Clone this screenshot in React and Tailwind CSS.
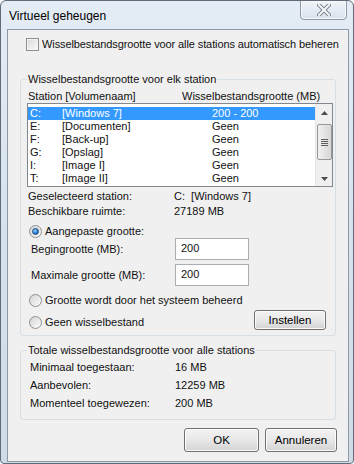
import React from 'react';

const drives = [
  { letter: 'C:', name: '[Windows 7]', size: '200 - 200', selected: true },
  { letter: 'E:', name: '[Documenten]', size: 'Geen' },
  { letter: 'F:', name: '[Back-up]', size: 'Geen' },
  { letter: 'G:', name: '[Opslag]', size: 'Geen' },
  { letter: 'I:', name: '[Image I]', size: 'Geen' },
  { letter: 'T:', name: '[Image II]', size: 'Geen' },
];

const Radio = ({ checked }) => (
  <span className="w-[13px] h-[13px] rounded-full border border-[#8e8f8f] bg-gradient-to-br from-[#d4d4d4] to-[#fcfcfc] flex items-center justify-center shrink-0">
    {checked && (
      <span className="w-[7px] h-[7px] rounded-full bg-[radial-gradient(circle_at_40%_35%,#9fd8fb,#2a7dd0_55%,#0d4a8c)] border border-[#1b4f85]" />
    )}
  </span>
);

const Button = ({ children, className = '' }) => (
  <button className={`rounded-[3px] border border-[#707070] bg-gradient-to-b from-[#f3f3f3] via-[#e8e8e8] to-[#d3d3d3] shadow-[inset_0_0_0_1px_#fbfbfb] text-[11.5px] text-black ${className}`}>
    {children}
  </button>
);

const Arrow = ({ up }) => (
  <svg width="7" height="4" viewBox="0 0 7 4">
    <path d={up ? 'M0 4 L3.5 0 L7 4 Z' : 'M0 0 L7 0 L3.5 4 Z'} fill="#4d4d4d" />
  </svg>
);

export default function App() {
  return (
    <div className="w-[354px] h-[464px] overflow-hidden relative rounded-t-[6px] rounded-b-[4px] border border-[#5f6b78] bg-gradient-to-b from-[#e4ecf5] via-[#d7e2ee] to-[#cfdbe7] font-['Liberation_Sans',sans-serif] text-[11px] text-[#111] leading-[15px]">
      {/* title bar */}
      <div className="h-[28px] pl-[8px] pt-[8px] text-[12px] text-black">Virtueel geheugen</div>
      <div className="absolute top-[-1px] right-[6px] w-[47px] h-[20px] rounded-b-[4px] border border-[#8c98a6] bg-gradient-to-b from-[#f0f4f8] to-[#d9e2ec] shadow-[inset_0_0_0_1px_#f7f9fb] flex items-center justify-center">
        <svg width="14" height="12" viewBox="0 0 14 12">
          <path d="M2 1 L12 11 M12 1 L2 11" stroke="#7d8590" strokeWidth="4" strokeLinecap="square" />
          <path d="M2 1 L12 11 M12 1 L2 11" stroke="#f4f6f8" strokeWidth="2" strokeLinecap="square" />
        </svg>
      </div>

      {/* client area */}
      <div className="ml-[6px] w-[342px] h-[433px] border border-[#8d99a7] bg-[#f0f0f0]">
        <div className="flex items-center h-[13px] mt-[8px] ml-[18px] gap-[3px] whitespace-nowrap">
          <span className="w-[13px] h-[13px] shrink-0 border border-[#8e8f8f] bg-gradient-to-br from-[#dadada] to-[#fbfbfb] shadow-[inset_0_0_0_1px_#f4f4f4]" />
          <span className="tracking-[-0.1px]">Wisselbestandsgrootte voor alle stations automatisch beheren</span>
        </div>

        <fieldset className="mt-[21px] ml-[12px] w-[316px] h-[264px] border border-[#d5dfe5] rounded-[3px] pl-[6px]">
          <legend className="px-[1px] leading-[15px]">Wisselbestandsgrootte voor elk station</legend>
          <div className="flex h-[14px] mt-[2px] leading-[14px]">
            <span className="w-[155px] pl-[1px]">Station [Volumenaam]</span>
            <span>Wisselbestandsgrootte (MB)</span>
          </div>

          <div className="w-[306px] h-[84px] border border-[#828790] bg-white flex">
            <div className="flex-1 pt-[3px]">
              {drives.map((d) => (
                <div
                  key={d.letter}
                  className={`flex h-[13px] leading-[13px] ${d.selected ? 'bg-[#3399ff] text-white' : ''}`}
                >
                  <span className="w-[34px] pl-[2px]">{d.letter}</span>
                  <span className="w-[150px]">{d.name}</span>
                  <span>{d.size}</span>
                </div>
              ))}
            </div>
            <div className="w-[17px] bg-[#f0f0f0] border-l border-[#e5e5e5] flex flex-col items-center">
              <div className="h-[17px] flex items-center justify-center"><Arrow up /></div>
              <div className="w-[15px] h-[36px] mt-[3px] rounded-[2px] border border-[#979797] bg-gradient-to-r from-[#f1f1f1] to-[#d7d7d7] flex flex-col items-center justify-center gap-[1px]">
                <span className="w-[7px] h-px bg-[#5f5f5f]" />
                <span className="w-[7px] h-px bg-[#5f5f5f]" />
                <span className="w-[7px] h-px bg-[#5f5f5f]" />
                <span className="w-[7px] h-px bg-[#5f5f5f]" />
              </div>
              <div className="flex-1" />
              <div className="h-[15px] flex items-center justify-center"><Arrow /></div>
            </div>
          </div>

          <div className="flex mt-[2px] pl-[1px]">
            <span className="w-[146px]">Geselecteerd station:</span>
            <span>C:&nbsp;&nbsp;[Windows 7]</span>
          </div>
          <div className="flex pl-[1px]">
            <span className="w-[146px]">Beschikbare ruimte:</span>
            <span>27189 MB</span>
          </div>

          <div className="flex items-center h-[13px] mt-[6px] ml-[2px] gap-[3px]">
            <Radio checked />
            <span>Aangepaste grootte:</span>
          </div>
          <div className="flex items-center h-[22px]">
            <span className="w-[148px] pl-[4px]">Begingrootte (MB):</span>
            <div className="w-[74px] h-[22px] border border-[#abadb3] bg-white pl-[5px] pt-[2px]">200</div>
          </div>
          <div className="flex items-center h-[22px] mt-[4px]">
            <span className="w-[148px] pl-[4px]">Maximale grootte (MB):</span>
            <div className="w-[74px] h-[22px] border border-[#abadb3] bg-white pl-[5px] pt-[2px]">200</div>
          </div>

          <div className="flex items-center h-[13px] mt-[8px] ml-[2px] gap-[3px]">
            <Radio />
            <span>Grootte wordt door het systeem beheerd</span>
          </div>
          <div className="flex mt-[3px]">
            <div className="flex items-center h-[13px] mt-[6px] ml-[2px] gap-[3px]">
              <Radio />
              <span>Geen wisselbestand</span>
            </div>
            <Button className="ml-auto mr-[9px] w-[72px] h-[20px]">Instellen</Button>
          </div>
        </fieldset>

        <fieldset className="mt-[7px] ml-[12px] w-[316px] h-[77px] border border-[#d5dfe5] rounded-[3px] pl-[6px]">
          <legend className="px-[1px] leading-[15px]">Totale wisselbestandsgrootte voor alle stations</legend>
          {[
            ['Minimaal toegestaan:', '16 MB'],
            ['Aanbevolen:', '12259 MB'],
            ['Momenteel toegewezen:', '200 MB'],
          ].map(([k, v]) => (
            <div key={k} className="flex h-[18px] leading-[18px] ml-[3px]">
              <span className="w-[145px]">{k}</span>
              <span>{v}</span>
            </div>
          ))}
        </fieldset>

        <div className="flex justify-end gap-[6px] mt-[8px] mr-[11px]">
          <Button className="w-[75px] h-[24px]">OK</Button>
          <Button className="w-[72px] h-[24px]">Annuleren</Button>
        </div>
      </div>
    </div>
  );
}
